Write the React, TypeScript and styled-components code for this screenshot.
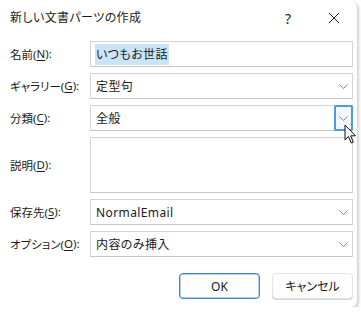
import React from 'react';
import styled, { createGlobalStyle } from 'styled-components';

const GlobalStyle = createGlobalStyle`
  html, body {
    margin: 0;
    padding: 0;
    background: #ffffff;
  }
  body {
    font-family: "Noto Sans", "Noto Sans CJK JP", sans-serif;
    font-size: 12px;
    color: #1a1a1a;
    font-feature-settings: "palt";
  }
`;

const Dialog = styled.div`
  position: relative;
  width: 357px;
  height: 307px;
  box-sizing: border-box;
  background: #ffffff;
  border-top-right-radius: 8px;
  border-bottom-right-radius: 6px;
  box-shadow: 1px 1px 0 #d6d6d6, 2px 2px 3px rgba(0, 0, 0, 0.18);
  display: flex;
  flex-direction: column;
`;

const TitleBar = styled.div`
  height: 36px;
  display: flex;
  align-items: center;
  padding-left: 10px;
  box-sizing: border-box;
`;

const Title = styled.div`
  flex: 1;
  font-size: 12px;
  color: #1a1a1a;
  padding-bottom: 2px;
  letter-spacing: 0.4px;
`;

const TitleButton = styled.div<{ $w: number }>`
  width: ${p => p.$w}px;
  height: 34px;
  display: flex;
  align-items: center;
  justify-content: center;
  font-size: 14px;
  color: #222;
`;

const Form = styled.div`
  display: grid;
  grid-template-columns: 80px 263px;
  row-gap: 6px;
  padding: 5px 0 0 10px;
`;

const Label = styled.label`
  display: flex;
  align-items: center;
  font-size: 11.5px;
  color: #1a1a1a;
  white-space: nowrap;
  padding-bottom: 1px;
  u {
    text-decoration: underline;
    text-underline-offset: 2px;
  }
`;

const Field = styled.div<{ $h?: number }>`
  position: relative;
  height: ${p => p.$h ?? 26}px;
  box-sizing: border-box;
  border: 1px solid #d4d4d4;
  border-bottom-color: #c6c6c6;
  background: #ffffff;
  display: flex;
  align-items: center;
  padding-left: 5px;
  font-size: 12px;
  color: #1a1a1a;
`;

const Value = styled.span`
  flex: 1;
  letter-spacing: 0.4px;
`;

const Selected = styled.span`
  background: #cce4f7;
  padding: 2px 1px;
  margin-left: -1px;
`;

const DropButton = styled.div<{ $hot?: boolean }>`
  width: 19px;
  height: 26px;
  margin: -1px -1px -1px 0;
  box-sizing: border-box;
  display: flex;
  align-items: center;
  justify-content: center;
  border: ${p => (p.$hot ? '2px solid #4a9ae8' : '1px solid transparent')};
  border-radius: ${p => (p.$hot ? '2px' : '0')};
  background: ${p => (p.$hot ? '#f3f8fd' : 'transparent')};
`;

const Buttons = styled.div`
  display: flex;
  justify-content: flex-end;
  gap: 12px;
  margin-top: 16px;
  padding-right: 4px;
`;

const Button = styled.button<{ $primary?: boolean }>`
  width: 81px;
  height: 26px;
  border-radius: 4px;
  font-family: inherit;
  font-feature-settings: "palt";
  font-size: 12px;
  color: #1a1a1a;
  background: #fdfdfd;
  border: 1px solid ${p => (p.$primary ? '#3f86c9' : '#e4e4e4')};
  box-shadow: ${p => (p.$primary ? 'inset 0 0 0 0.5px #6aa3da' : '0 1px 0 #d4d4d4')};
  padding: 0;
`;

const Cursor = styled.svg`
  position: absolute;
  left: 344px;
  top: 124px;
  pointer-events: none;
`;

const Chevron = () => (
  <svg width="9" height="5" viewBox="0 0 9 5">
    <path d="M0.5 0.5 L4.5 4.5 L8.5 0.5" fill="none" stroke="#777" strokeWidth="0.9" />
  </svg>
);

const App: React.FC = () => {
  return (
    <>
      <GlobalStyle />
      <Dialog>
        <TitleBar>
          <Title>新しい文書パーツの作成</Title>
          <TitleButton $w={46}>?</TitleButton>
          <TitleButton $w={46}>
            <svg width="12" height="12" viewBox="0 0 12 12">
              <path d="M1 1 L11 11 M11 1 L1 11" stroke="#222" strokeWidth="1" />
            </svg>
          </TitleButton>
        </TitleBar>
        <Form>
          <Label>名前(<u>N</u>):</Label>
          <Field>
            <Value><Selected>いつもお世話</Selected></Value>
          </Field>

          <Label>ギャラリー(<u>G</u>):</Label>
          <Field>
            <Value>定型句</Value>
            <DropButton><Chevron /></DropButton>
          </Field>

          <Label>分類(<u>C</u>):</Label>
          <Field>
            <Value>全般</Value>
            <DropButton $hot><Chevron /></DropButton>
          </Field>

          <Label>説明(<u>D</u>):</Label>
          <Field $h={56} />

          <Label>保存先(<u>S</u>):</Label>
          <Field>
            <Value>NormalEmail</Value>
            <DropButton><Chevron /></DropButton>
          </Field>

          <Label>オプション(<u>O</u>):</Label>
          <Field>
            <Value>内容のみ挿入</Value>
            <DropButton><Chevron /></DropButton>
          </Field>
        </Form>
        <Buttons>
          <Button $primary>OK</Button>
          <Button>キャンセル</Button>
        </Buttons>
        <Cursor width="13" height="21" viewBox="0 0 13 21">
          <path
            d="M1 1 L1 16 L4.5 12.5 L7.2 19 L9.3 18.1 L6.7 11.8 L11.5 11.8 Z"
            fill="#ffffff"
            stroke="#111"
            strokeWidth="1"
            strokeLinejoin="round"
          />
        </Cursor>
      </Dialog>
    </>
  );
};

export default App;
